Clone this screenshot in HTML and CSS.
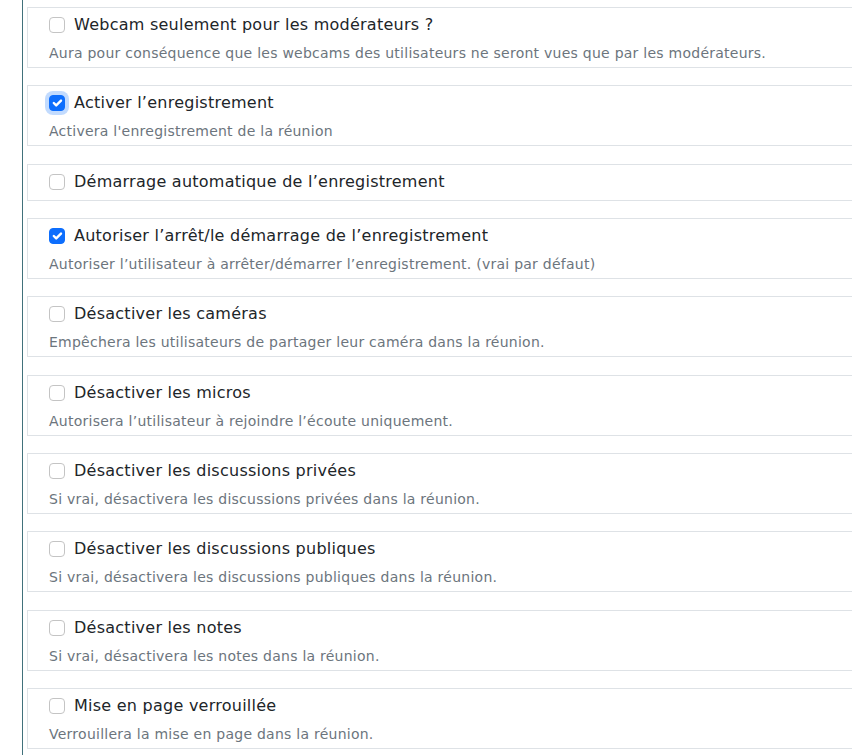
FILE: index.html
```html
<!DOCTYPE html>
<html lang="fr">
<head>
<meta charset="utf-8">
<title>Paramètres</title>
<link rel="stylesheet" href="styles.css">
</head>
<body>
<div class="panel">
  <div class="option">
    <div class="head"><span class="box"></span><span class="label">Webcam seulement pour les modérateurs ?</span></div>
    <div class="desc">Aura pour conséquence que les webcams des utilisateurs ne seront vues que par les modérateurs.</div>
  </div>
  <div class="option">
    <div class="head"><span class="box checked focus"><svg viewBox="0 0 20 20" width="16" height="16"><path d="M6 10l3 3l6-6" fill="none" stroke="#fff" stroke-width="3" stroke-linecap="round" stroke-linejoin="round"/></svg></span><span class="label">Activer l’enregistrement</span></div>
    <div class="desc">Activera l'enregistrement de la réunion</div>
  </div>
  <div class="option">
    <div class="head"><span class="box"></span><span class="label">Démarrage automatique de l’enregistrement</span></div>
  </div>
  <div class="option">
    <div class="head"><span class="box checked"><svg viewBox="0 0 20 20" width="16" height="16"><path d="M6 10l3 3l6-6" fill="none" stroke="#fff" stroke-width="3" stroke-linecap="round" stroke-linejoin="round"/></svg></span><span class="label">Autoriser l’arrêt/le démarrage de l’enregistrement</span></div>
    <div class="desc">Autoriser l’utilisateur à arrêter/démarrer l’enregistrement. (vrai par défaut)</div>
  </div>
  <div class="option">
    <div class="head"><span class="box"></span><span class="label">Désactiver les caméras</span></div>
    <div class="desc">Empêchera les utilisateurs de partager leur caméra dans la réunion.</div>
  </div>
  <div class="option">
    <div class="head"><span class="box"></span><span class="label">Désactiver les micros</span></div>
    <div class="desc">Autorisera l’utilisateur à rejoindre l’écoute uniquement.</div>
  </div>
  <div class="option">
    <div class="head"><span class="box"></span><span class="label">Désactiver les discussions privées</span></div>
    <div class="desc">Si vrai, désactivera les discussions privées dans la réunion.</div>
  </div>
  <div class="option">
    <div class="head"><span class="box"></span><span class="label">Désactiver les discussions publiques</span></div>
    <div class="desc">Si vrai, désactivera les discussions publiques dans la réunion.</div>
  </div>
  <div class="option">
    <div class="head"><span class="box"></span><span class="label">Désactiver les notes</span></div>
    <div class="desc">Si vrai, désactivera les notes dans la réunion.</div>
  </div>
  <div class="option">
    <div class="head"><span class="box"></span><span class="label">Mise en page verrouillée</span></div>
    <div class="desc">Verrouillera la mise en page dans la réunion.</div>
  </div>
</div>
</body>
</html>
```

FILE: styles.css
```css
html, body {
  margin: 0;
  padding: 0;
  background: #fff;
  overflow: hidden;
  height: 755px;
}
body {
  font-family: "DejaVu Sans", Verdana, sans-serif;
  color: #212529;
}
.panel {
  margin-left: 22px;
  height: 755px;
  border-left: 1px solid #41717b;
  padding: 7px 0 0 4px;
  box-sizing: border-box;
  display: flex;
  flex-direction: column;
  gap: 17.33px;
}
.option {
  border: 1px solid #dee2e6;
  border-right: none;
  padding: 5px 0 6px 21px;
}
.head {
  display: flex;
  align-items: center;
  gap: 9px;
  height: 24px;
}
.box {
  width: 16px;
  height: 16px;
  box-sizing: border-box;
  border: 1px solid #c4c4c4;
  border-radius: 4px;
  flex: none;
  display: flex;
}
.box.checked {
  background: #0d6efd;
  border-color: #0d6efd;
}
.box.checked svg {
  margin: -1px;
}
.box.focus {
  box-shadow: 0 0 0 4px rgba(13, 110, 253, 0.25);
}
.label {
  font-size: 16px;
  line-height: 24px;
  letter-spacing: 0.25px;
}
.desc {
  margin-top: 7px;
  margin-bottom: -1px;
  font-size: 14px;
  line-height: 18px;
  letter-spacing: 0.25px;
  color: #6c757d;
}
```
